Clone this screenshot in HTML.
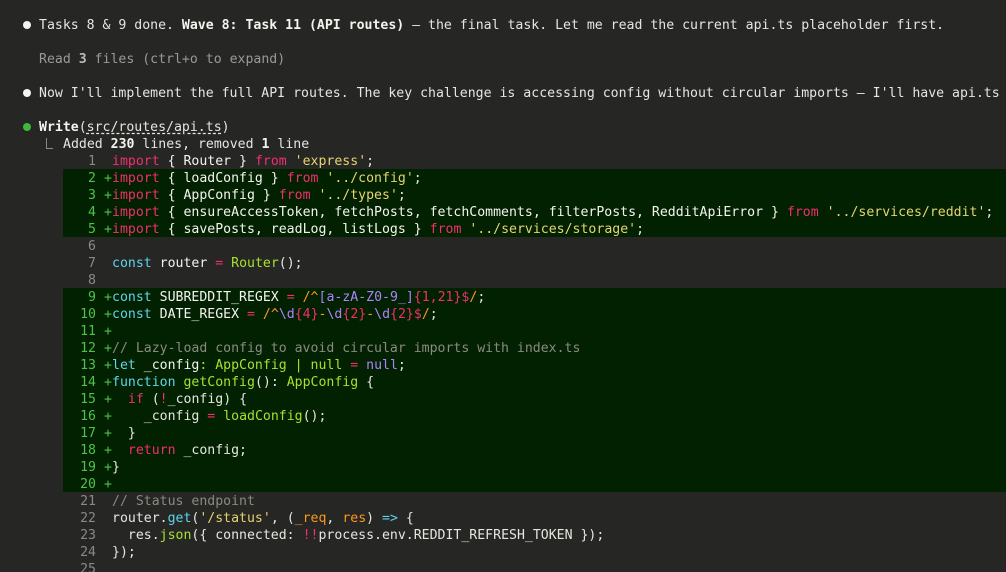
<!DOCTYPE html>
<html><head><meta charset="utf-8"><style>
html,body{margin:0;padding:0;background:#262624;width:1006px;height:572px;overflow:hidden}
body{font-family:"DejaVu Sans Mono","Liberation Mono",monospace;font-size:13.2px;color:#e6e6e0;position:relative}
.l{position:absolute;left:0;height:17px;line-height:17px;white-space:pre;width:1006px;overflow:hidden}
.g{position:absolute;left:63px;right:0;background:#022100}
.n{display:inline-block;width:33px;text-align:right;color:#8a8a85}
.a .n,.a .s{color:#4fc24a}
.s{display:inline-block;width:16px;text-align:right;color:#4fc24a}
.k{color:#f0306e}.st{color:#e6d470}.f{color:#a6e22e}.c{color:#5fd4ee}.o{color:#fd971f}.p{color:#ae81ff}.cm{color:#8a8a82}.w{color:#f4f4ee}
b{color:#f4f4ee}
.dot{position:absolute;width:8px;height:8px;border-radius:50%;background:#f4f4f0}
</style></head><body>
<div class="dot" style="left:23px;top:21px"></div>
<div class="l" style="left:39px;top:17px">Tasks 8 &amp; 9 done. <b>Wave 8: Task 11 (API routes)</b> — the final task. Let me read the current api.ts placeholder first.</div>
<div class="l" style="left:39px;top:51px;color:#9a9a95">Read <b style="color:#bdbdb8">3</b> files (ctrl+o to expand)</div>
<div class="dot" style="left:23px;top:89px"></div>
<div class="l" style="left:39px;top:85px">Now I'll implement the full API routes. The key challenge is accessing config without circular imports — I'll have api.ts</div>
<div class="dot" style="left:23px;top:123px;background:#3fb83f"></div>
<div class="l" style="left:39px;top:119px"><b>Write</b>(<span style="text-decoration:underline dashed;text-underline-offset:2px">src/routes/api.ts</span>)</div>
<div style="position:absolute;left:46px;top:138px;width:6px;height:10px;border-left:1px solid #8a8a85;border-bottom:1px solid #8a8a85"></div>
<div class="l" style="left:63px;top:136px">Added <b>230</b> lines, removed <b>1</b> line</div>

<div class="g" style="top:169px;height:68px"></div>
<div class="g" style="top:288px;height:204px"></div>

<div style="position:absolute;left:63px;top:153px;width:943px">
<div class="l" style="top:0"><span class="n">1</span><span class="s"> </span><span class="k">import</span> <span class="w">{ Router }</span> <span class="k">from</span> <span class="st">'express'</span>;</div>
<div class="l a" style="top:17px"><span class="n">2</span><span class="s">+</span><span class="k">import</span> <span class="w">{ loadConfig }</span> <span class="k">from</span> <span class="st">'../config'</span>;</div>
<div class="l a" style="top:34px"><span class="n">3</span><span class="s">+</span><span class="k">import</span> <span class="w">{ AppConfig }</span> <span class="k">from</span> <span class="st">'../types'</span>;</div>
<div class="l a" style="top:51px"><span class="n">4</span><span class="s">+</span><span class="k">import</span> <span class="w">{ ensureAccessToken, fetchPosts, fetchComments, filterPosts, RedditApiError }</span> <span class="k">from</span> <span class="st">'../services/reddit'</span>;</div>
<div class="l a" style="top:68px"><span class="n">5</span><span class="s">+</span><span class="k">import</span> <span class="w">{ savePosts, readLog, listLogs }</span> <span class="k">from</span> <span class="st">'../services/storage'</span>;</div>
<div class="l" style="top:85px"><span class="n">6</span></div>
<div class="l" style="top:102px"><span class="n">7</span><span class="s"> </span><span class="c">const</span> <span class="w">router</span> <span class="k">=</span> <span class="f">Router</span>();</div>
<div class="l" style="top:119px"><span class="n">8</span></div>
<div class="l a" style="top:136px"><span class="n">9</span><span class="s">+</span><span class="c">const</span> <span class="w">SUBREDDIT_REGEX</span> <span class="k">=</span> <span class="o">/^</span><span class="p">[a-zA-Z0-9_]</span><span class="k">{1,21}$</span><span class="o">/</span>;</div>
<div class="l a" style="top:153px"><span class="n">10</span><span class="s">+</span><span class="c">const</span> <span class="w">DATE_REGEX</span> <span class="k">=</span> <span class="o">/^</span><span class="p">\d</span><span class="k">{4}</span><span class="o">-</span><span class="p">\d</span><span class="k">{2}</span><span class="o">-</span><span class="p">\d</span><span class="k">{2}$</span><span class="o">/</span>;</div>
<div class="l a" style="top:170px"><span class="n">11</span><span class="s">+</span></div>
<div class="l a" style="top:187px"><span class="n">12</span><span class="s">+</span><span class="cm">// Lazy-load config to avoid circular imports with index.ts</span></div>
<div class="l a" style="top:204px"><span class="n">13</span><span class="s">+</span><span class="c">let</span> <span class="w">_config</span><span class="f">: AppConfig | null</span> <span class="k">=</span> <span class="p">null</span>;</div>
<div class="l a" style="top:221px"><span class="n">14</span><span class="s">+</span><span class="c">function</span> <span class="f">getConfig</span>(): <span class="f">AppConfig</span> {</div>
<div class="l a" style="top:238px"><span class="n">15</span><span class="s">+</span>  <span class="k">if</span> (<span class="k">!</span>_config) {</div>
<div class="l a" style="top:255px"><span class="n">16</span><span class="s">+</span>    _config <span class="k">=</span> <span class="f">loadConfig</span>();</div>
<div class="l a" style="top:272px"><span class="n">17</span><span class="s">+</span>  }</div>
<div class="l a" style="top:289px"><span class="n">18</span><span class="s">+</span>  <span class="k">return</span> _config;</div>
<div class="l a" style="top:306px"><span class="n">19</span><span class="s">+</span>}</div>
<div class="l a" style="top:323px"><span class="n">20</span><span class="s">+</span></div>
<div class="l" style="top:340px"><span class="n">21</span><span class="s"> </span><span class="cm">// Status endpoint</span></div>
<div class="l" style="top:357px"><span class="n">22</span><span class="s"> </span>router.<span class="c">get</span>(<span class="st">'/status'</span>, (<span class="o">_req</span>, <span class="o">res</span>) <span class="c">=&gt;</span> {</div>
<div class="l" style="top:374px"><span class="n">23</span><span class="s"> </span>  res.<span class="f">json</span>({ connected: <span class="k">!!</span>process.env.REDDIT_REFRESH_TOKEN });</div>
<div class="l" style="top:391px"><span class="n">24</span><span class="s"> </span>});</div>
<div class="l" style="top:408px"><span class="n">25</span></div>
</div>
</body></html>
